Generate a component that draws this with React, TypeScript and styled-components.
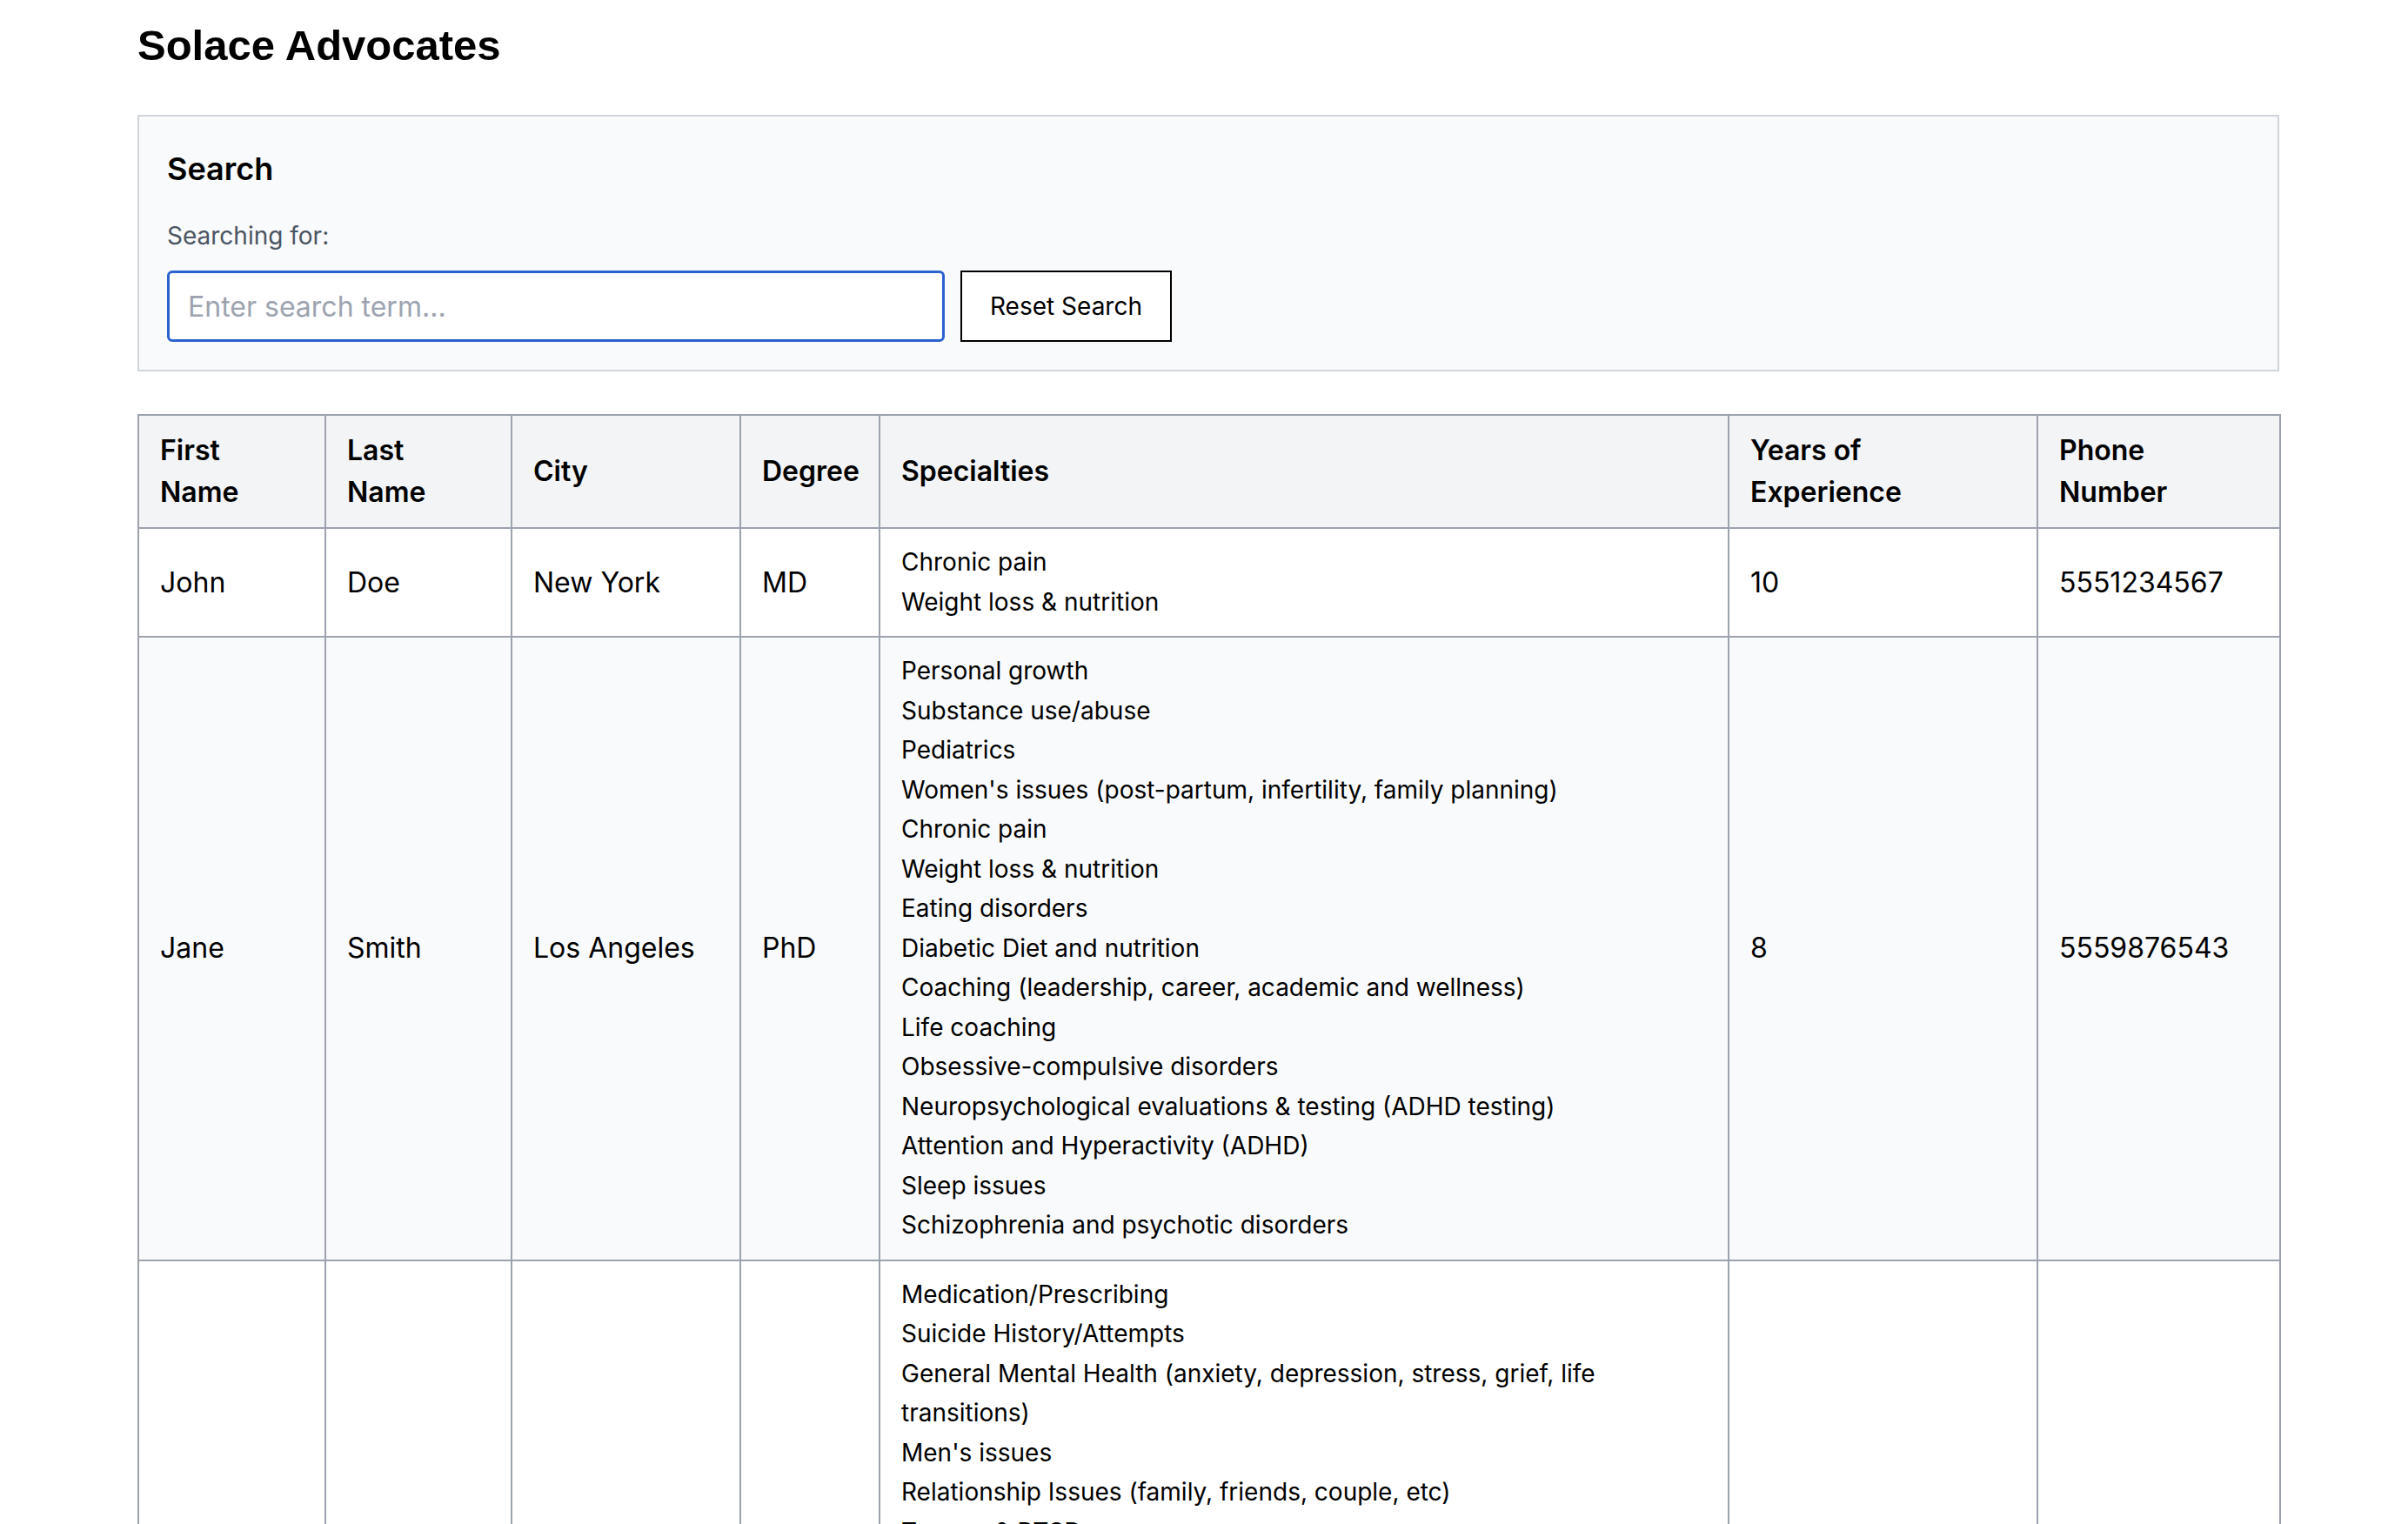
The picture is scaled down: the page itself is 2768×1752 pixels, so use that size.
import { FC, useState } from 'react';
import styled, { createGlobalStyle } from 'styled-components';

const GlobalStyle = createGlobalStyle`
  html, body {
    margin: 0;
    padding: 0;
    background: #ffffff;
  }

  body {
    font-family: Inter, "Noto Sans", sans-serif;
    color: #000000;
  }

  * {
    box-sizing: border-box;
  }
`;

const Main = styled.main`
  padding: 20px 148px 0 158px;
`;

const Title = styled.h1`
  margin: 0 0 48px;
  font-family: "Liberation Sans", Arial, sans-serif;
  font-size: 49px;
  line-height: 64px;
  font-weight: 700;
`;

const SearchPanel = styled.section`
  border: 2px solid #d1d5db;
  background: #f9fafb;
  padding: 32px;
`;

const PanelTitle = styled.h2`
  margin: 0;
  font-size: 36px;
  line-height: 56px;
  font-weight: 600;
  color: #000000;
`;

const Label = styled.p`
  margin: 29px 0 0;
  font-size: 28px;
  line-height: 40px;
  color: #4b5563;
`;

const SearchRow = styled.div`
  display: flex;
  align-items: center;
  gap: 18px;
  margin-top: 20px;
`;

const SearchInput = styled.input`
  width: 894px;
  height: 82px;
  padding: 0 21px;
  border: 3px solid #2b62d0;
  border-radius: 6px;
  background: #ffffff;
  font-family: Inter, sans-serif;
  font-size: 32px;
  color: #111827;
  outline: none;

  &::placeholder {
    color: #9ca3af;
  }
`;

const ResetButton = styled.button`
  height: 82px;
  padding: 0 32px;
  border: 2px solid #000000;
  background: #ffffff;
  font-family: Inter, sans-serif;
  font-size: 28px;
  color: #000000;
  cursor: pointer;
`;

const Table = styled.table`
  margin-top: 49px;
  width: 2462px;
  table-layout: fixed;
  border-collapse: collapse;
`;

const HeadCell = styled.th`
  padding: 16px 32px 16px 24px;
  border: 2px solid #9ca3af;
  background: #f3f4f6;
  text-align: left;
  vertical-align: middle;
  font-size: 32px;
  line-height: 48px;
  font-weight: 600;
  color: #000000;
`;

const Row = styled.tr<{ $striped: boolean }>`
  background: ${({ $striped }) => ($striped ? '#f9fafb' : '#ffffff')};
`;

const Cell = styled.td`
  padding: 16px 24px;
  border: 2px solid #9ca3af;
  vertical-align: middle;
  font-size: 32px;
  line-height: 48px;
  color: #000000;
`;

const Specialty = styled.div`
  font-size: 28px;
  line-height: 45.5px;
`;

type Advocate = {
  firstName: string;
  lastName: string;
  city: string;
  degree: string;
  specialties: string[];
  yearsOfExperience: number;
  phoneNumber: number;
};

const advocates: Advocate[] = [
  {
    firstName: 'John',
    lastName: 'Doe',
    city: 'New York',
    degree: 'MD',
    specialties: ['Chronic pain', 'Weight loss & nutrition'],
    yearsOfExperience: 10,
    phoneNumber: 5551234567,
  },
  {
    firstName: 'Jane',
    lastName: 'Smith',
    city: 'Los Angeles',
    degree: 'PhD',
    specialties: [
      'Personal growth',
      'Substance use/abuse',
      'Pediatrics',
      "Women's issues (post-partum, infertility, family planning)",
      'Chronic pain',
      'Weight loss & nutrition',
      'Eating disorders',
      'Diabetic Diet and nutrition',
      'Coaching (leadership, career, academic and wellness)',
      'Life coaching',
      'Obsessive-compulsive disorders',
      'Neuropsychological evaluations & testing (ADHD testing)',
      'Attention and Hyperactivity (ADHD)',
      'Sleep issues',
      'Schizophrenia and psychotic disorders',
    ],
    yearsOfExperience: 8,
    phoneNumber: 5559876543,
  },
  {
    firstName: 'Alice',
    lastName: 'Johnson',
    city: 'Chicago',
    degree: 'MSW',
    specialties: [
      'Medication/Prescribing',
      'Suicide History/Attempts',
      'General Mental Health (anxiety, depression, stress, grief, life transitions)',
      "Men's issues",
      'Relationship Issues (family, friends, couple, etc)',
      'Trauma & PTSD',
      'Personality disorders',
      'Personal growth',
      'Substance use/abuse',
      'Pediatrics',
      "Women's issues (post-partum, infertility, family planning)",
      'Chronic pain',
      'Weight loss & nutrition',
      'Eating disorders',
      'Diabetic Diet and nutrition',
    ],
    yearsOfExperience: 5,
    phoneNumber: 5555555555,
  },
  {
    firstName: 'Michael',
    lastName: 'Brown',
    city: 'Houston',
    degree: 'MD',
    specialties: ['Chronic pain', 'Sleep issues'],
    yearsOfExperience: 12,
    phoneNumber: 5551112222,
  },
];

const columns = [
  { title: 'First Name', width: 215 },
  { title: 'Last Name', width: 214 },
  { title: 'City', width: 263 },
  { title: 'Degree', width: 160 },
  { title: 'Specialties', width: 976 },
  { title: 'Years of Experience', width: 355 },
  { title: 'Phone Number', width: 279 },
];

const App: FC = () => {
  const [term, setTerm] = useState('');

  const query = term.toLowerCase();
  const filtered = advocates.filter(
    (a) =>
      !query ||
      a.firstName.toLowerCase().includes(query) ||
      a.lastName.toLowerCase().includes(query) ||
      a.city.toLowerCase().includes(query) ||
      a.degree.toLowerCase().includes(query) ||
      a.specialties.some((s) => s.toLowerCase().includes(query))
  );

  return (
    <>
      <GlobalStyle />
      <Main>
        <Title>Solace Advocates</Title>
        <SearchPanel>
          <PanelTitle>Search</PanelTitle>
          <Label>Searching for: {term}</Label>
          <SearchRow>
            <SearchInput
              placeholder="Enter search term..."
              value={term}
              onChange={(e) => setTerm(e.target.value)}
            />
            <ResetButton onClick={() => setTerm('')}>Reset Search</ResetButton>
          </SearchRow>
        </SearchPanel>
        <Table>
          <colgroup>
            {columns.map((c) => (
              <col key={c.title} style={{ width: c.width }} />
            ))}
          </colgroup>
          <thead>
            <tr>
              {columns.map((c) => (
                <HeadCell key={c.title}>{c.title}</HeadCell>
              ))}
            </tr>
          </thead>
          <tbody>
            {filtered.map((a, i) => (
              <Row key={a.phoneNumber} $striped={i % 2 === 1}>
                <Cell>{a.firstName}</Cell>
                <Cell>{a.lastName}</Cell>
                <Cell>{a.city}</Cell>
                <Cell>{a.degree}</Cell>
                <Cell>
                  {a.specialties.map((s) => (
                    <Specialty key={s}>{s}</Specialty>
                  ))}
                </Cell>
                <Cell>{a.yearsOfExperience}</Cell>
                <Cell>{a.phoneNumber}</Cell>
              </Row>
            ))}
          </tbody>
        </Table>
      </Main>
    </>
  );
};

export default App;
